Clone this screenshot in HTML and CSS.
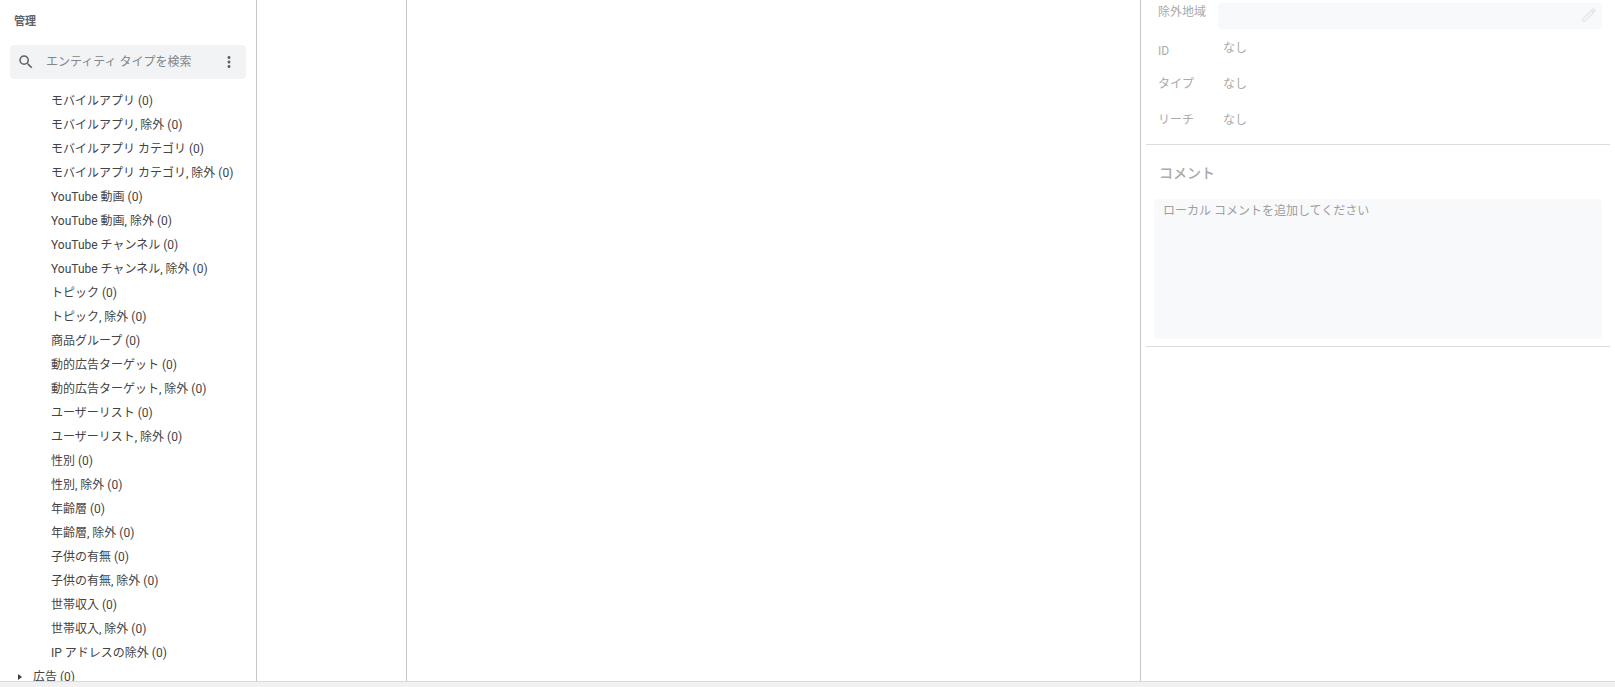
FILE: index.html
```
<!DOCTYPE html>
<html lang="ja">
<head>
  <meta charset="utf-8">
  <meta name="viewport" content="width=device-width, initial-scale=1.0">
  <title>管理</title>
  <link rel="stylesheet" href="styles.css">
</head>
<body>
  <div class="workspace">
    <!-- 管理パネル -->
    <nav class="sidebar">
      <h2 class="sidebar-title">管理</h2>
      <div class="search">
        <svg class="search-icon" viewBox="0 0 24 24" aria-hidden="true"><path d="M15.5 14h-.79l-.28-.27A6.47 6.47 0 0 0 16 9.5 6.5 6.5 0 1 0 9.5 16c1.61 0 3.09-.59 4.23-1.57l.27.28v.79l5 4.99L20.49 19l-4.99-5zm-6 0C7.01 14 5 11.99 5 9.5S7.01 5 9.5 5 14 7.01 14 9.5 11.99 14 9.5 14z"/></svg>
        <input type="text" class="search-input" placeholder="エンティティ タイプを検索" aria-label="エンティティ タイプを検索">
        <button type="button" class="menu-button" aria-label="メニュー">
          <svg viewBox="0 0 24 24" aria-hidden="true"><path d="M12 8c1.1 0 2-.9 2-2s-.9-2-2-2-2 .9-2 2 .9 2 2 2zm0 2c-1.1 0-2 .9-2 2s.9 2 2 2 2-.9 2-2-.9-2-2-2zm0 6c-1.1 0-2 .9-2 2s.9 2 2 2 2-.9 2-2-.9-2-2-2z"/></svg>
        </button>
      </div>
      <ul class="entity-list">
        <li><a href="#">モバイルアプリ (0)</a></li>
        <li><a href="#">モバイルアプリ, 除外 (0)</a></li>
        <li><a href="#">モバイルアプリ カテゴリ (0)</a></li>
        <li><a href="#">モバイルアプリ カテゴリ, 除外 (0)</a></li>
        <li><a href="#">YouTube 動画 (0)</a></li>
        <li><a href="#">YouTube 動画, 除外 (0)</a></li>
        <li><a href="#">YouTube チャンネル (0)</a></li>
        <li><a href="#">YouTube チャンネル, 除外 (0)</a></li>
        <li><a href="#">トピック (0)</a></li>
        <li><a href="#">トピック, 除外 (0)</a></li>
        <li><a href="#">商品グループ (0)</a></li>
        <li><a href="#">動的広告ターゲット (0)</a></li>
        <li><a href="#">動的広告ターゲット, 除外 (0)</a></li>
        <li><a href="#">ユーザーリスト (0)</a></li>
        <li><a href="#">ユーザーリスト, 除外 (0)</a></li>
        <li><a href="#">性別 (0)</a></li>
        <li><a href="#">性別, 除外 (0)</a></li>
        <li><a href="#">年齢層 (0)</a></li>
        <li><a href="#">年齢層, 除外 (0)</a></li>
        <li><a href="#">子供の有無 (0)</a></li>
        <li><a href="#">子供の有無, 除外 (0)</a></li>
        <li><a href="#">世帯収入 (0)</a></li>
        <li><a href="#">世帯収入, 除外 (0)</a></li>
        <li><a href="#">IP アドレスの除外 (0)</a></li>
        <li><a href="#" class="group"><svg class="arrow" viewBox="0 0 4 8" aria-hidden="true"><path d="M0 1l4 3-4 3z"/></svg>広告 (0)</a></li>
      </ul>
    </nav>

    <div class="column"></div>
    <main class="content"></main>

    <!-- 編集パネル -->
    <aside class="details">
      <section class="section fields">
        <div class="field field-edit">
          <label for="excluded-location">除外地域</label>
          <div class="edit-box">
            <input type="text" id="excluded-location" disabled>
            <svg class="pencil" viewBox="0 0 24 24" aria-hidden="true"><path d="M20.41 4.94l-1.35-1.35a2 2 0 0 0-2.83 0L3 16.82V21h4.18L20.41 7.77a2 2 0 0 0 0-2.83zM6.41 19.06L5 19v-1.36l9.82-9.82 1.41 1.41-9.82 9.83z"/></svg>
          </div>
        </div>
        <div class="field field-id">
          <span class="name">ID</span>
          <span class="value">なし</span>
        </div>
        <div class="field">
          <span class="name">タイプ</span>
          <span class="value">なし</span>
        </div>
        <div class="field">
          <span class="name">リーチ</span>
          <span class="value">なし</span>
        </div>
      </section>
      <section class="section comment">
        <label class="comment-title" for="comment">コメント</label>
        <textarea id="comment" placeholder="ローカル コメントを追加してください" disabled></textarea>
      </section>
    </aside>
  </div>
  <footer class="status-bar"></footer>
</body>
</html>
```
FILE: styles.css
```
* {
  box-sizing: border-box;
}
body {
  display: flex;
  flex-direction: column;
  height: 100vh;
  margin: 0;
  overflow: hidden;
  background: #fff;
  color: #444;
  font-family: Roboto, "Noto Sans CJK JP", sans-serif;
  font-size: 12px;
  line-height: 24px;
}
input, textarea, button {
  padding: 0;
  border: 0;
  background: none;
  font: inherit;
  color: inherit;
}
.workspace {
  display: flex;
  flex: 1;
  min-height: 0;
}

/* 管理パネル */
.sidebar {
  width: 257px;
  flex-shrink: 0;
  overflow: hidden;
  border-right: 1px solid #c6c6c6;
}
.sidebar-title {
  margin: 10px 14px 11px;
  color: #5f6368;
  font-size: 11px;
  font-weight: 700;
}
.search {
  display: flex;
  align-items: center;
  height: 34px;
  margin: 0 10px 10px;
  padding: 0 8px 0 7px;
  border-radius: 4px;
  background: #f1f3f4;
}
.search svg {
  display: block;
  width: 18px;
  height: 18px;
  flex-shrink: 0;
  fill: #5f6368;
}
.search-input {
  flex: 1;
  min-width: 0;
  height: 24px;
  margin-left: 11px;
}
.search-input::placeholder {
  color: #80868b;
}
.entity-list {
  margin: 0;
  padding: 0;
  list-style: none;
}
.entity-list a {
  display: block;
  padding-left: 51px;
  color: inherit;
  text-decoration: none;
  white-space: nowrap;
}
.entity-list .group {
  display: flex;
  align-items: center;
  padding-left: 18px;
}
.arrow {
  width: 4px;
  height: 8px;
  margin-right: 11px;
  fill: #3c4043;
}

.column {
  width: 150px;
  flex-shrink: 0;
  border-right: 1px solid #c6c6c6;
}
.content {
  flex: 1;
}

/* 編集パネル */
.details {
  width: 475px;
  flex-shrink: 0;
  padding: 0 5px;
  border-left: 1px solid #c6c6c6;
  color: #aaa;
}
.section {
  border-bottom: 1px solid #dadce0;
}
.fields {
  padding-bottom: 6px;
}
.field {
  display: flex;
  align-items: center;
  height: 36px;
  padding: 0 8px 0 12px;
}
.field label,
.field .name {
  width: 60px;
}
.field .value {
  padding-left: 5px;
}
.field-edit {
  height: 30px;
  align-items: flex-start;
}
.field-id .name {
  padding-top: 6px;
}
.edit-box {
  display: flex;
  align-items: center;
  flex: 1;
  height: 26px;
  margin-top: 3px;
  padding: 0 4px 2px 8px;
  border-radius: 4px;
  background: #f8f9fb;
}
.edit-box input {
  flex: 1;
  min-width: 0;
}
.pencil {
  width: 18px;
  height: 18px;
  fill: #e6e7e9;
}
.comment {
  padding: 16px 8px 7px;
}
.comment-title {
  display: block;
  margin: 0 5px 14px;
  font-size: 14px;
  font-weight: 500;
}
.comment textarea {
  display: block;
  width: 100%;
  height: 140px;
  padding: 0 9px;
  border-radius: 4px;
  background: #f8f9fb;
  resize: none;
}
.comment textarea::placeholder {
  color: #9e9e9e;
}

.status-bar {
  height: 6px;
  flex-shrink: 0;
  border-top: 1px solid #dadada;
  background: #f1f1f1;
}
```
